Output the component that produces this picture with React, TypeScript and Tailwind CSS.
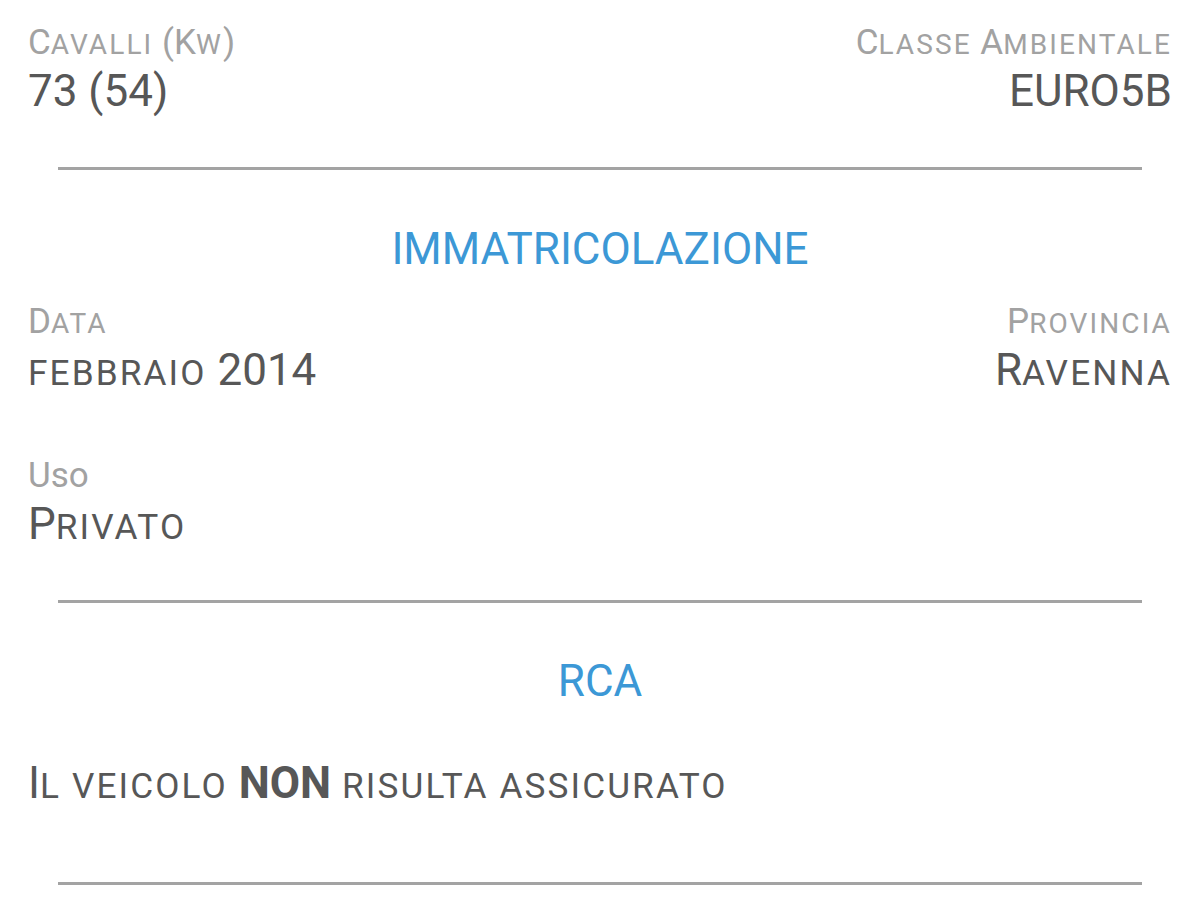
import { Fragment } from 'react';

// Android-style small caps: lowercase letters drawn as uppercase at 80% size
function SmallCaps({ text }: { text: string }) {
  const runs: { lower: boolean; s: string }[] = [];
  for (const ch of text) {
    const lower = ch !== ch.toUpperCase();
    const last = runs[runs.length - 1];
    if (last && last.lower === lower) last.s += ch;
    else runs.push({ lower, s: ch });
  }
  return (
    <>
      {runs.map((r, i) =>
        r.lower ? (
          <span key={i} className="text-[0.8em] leading-none uppercase tracking-[2.1px]">
            {r.s}
          </span>
        ) : (
          <Fragment key={i}>{r.s}</Fragment>
        )
      )}
    </>
  );
}

function Field({
  label,
  value,
  align = 'left',
  capsLabel = true,
}: {
  label: string;
  value: string;
  align?: 'left' | 'right';
  capsLabel?: boolean;
}) {
  return (
    <div className={align === 'right' ? 'text-right' : 'text-left'}>
      <div className="text-[35px] leading-[40px] text-[#a2a2a2] whitespace-nowrap">
        {capsLabel ? <SmallCaps text={label} /> : label}
      </div>
      <div className="mt-[2px] text-[44px] leading-[52px] text-[#575757] whitespace-nowrap">
        <SmallCaps text={value} />
      </div>
    </div>
  );
}

function Divider() {
  return <div className="mx-[30px] h-[3px] bg-[#a3a3a3]" />;
}

function SectionTitle({ children }: { children: string }) {
  return (
    <div className="text-center text-[44px] leading-[52px] text-[#3c98d6]">{children}</div>
  );
}

export default function App() {
  return (
    <div
      className="w-[1200px] h-[900px] overflow-hidden bg-white px-[28px] pt-[23px]"
      style={{ fontFamily: 'Roboto, "Noto Sans", sans-serif' }}
    >
      {/* Motore */}
      <div className="flex justify-between">
        <Field label="Cavalli (Kw)" value="73 (54)" />
        <Field label="Classe Ambientale" value="EURO5B" align="right" />
      </div>

      <div className="mt-[50px]">
        <Divider />
      </div>

      {/* Immatricolazione */}
      <div className="mt-[53px]">
        <SectionTitle>IMMATRICOLAZIONE</SectionTitle>
      </div>

      <div className="mt-[27px] flex justify-between">
        <Field label="Data" value="febbraio 2014" />
        <Field label="Provincia" value="Ravenna" align="right" />
      </div>

      <div className="mt-[60px]">
        <Field label="Uso" value="Privato" capsLabel={false} />
      </div>

      <div className="mt-[50px]">
        <Divider />
      </div>

      {/* RCA */}
      <div className="mt-[52px]">
        <SectionTitle>RCA</SectionTitle>
      </div>

      <div className="mt-[50px] text-[44px] leading-[52px] text-[#575757] whitespace-nowrap">
        <SmallCaps text="Il veicolo " />
        <span className="font-bold">NON</span>
        <SmallCaps text=" risulta assicurato" />
      </div>

      <div className="mt-[73px]">
        <Divider />
      </div>
    </div>
  );
}
